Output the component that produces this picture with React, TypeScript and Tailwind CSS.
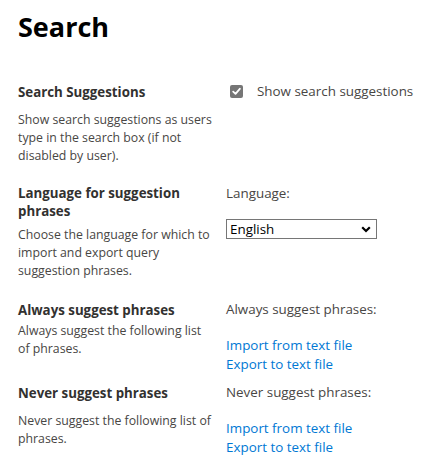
import React from 'react';

const font = { fontFamily: '"Open Sans", "Noto Sans", sans-serif' };

type SectionProps = { title: string; desc: string; gap: string; className?: string; children: React.ReactNode };

const Section = ({ title, desc, gap, className, children }: SectionProps) => (
  <div className={`flex ${className ?? ''}`}>
    <div className="w-[196px] shrink-0">
      <h3 className="text-[13.3px] font-bold leading-[18px] text-[#323130]">{title}</h3>
      <p className={`${gap} text-[12.3px] leading-[18px] text-[#484644]`}>{desc}</p>
    </div>
    <div className="ml-[12px] flex-1">{children}</div>
  </div>
);

const Link = ({ children }: { children: React.ReactNode }) => (
  <a href="#" className="block text-[13.4px] leading-[19px] text-[#0078d4]">{children}</a>
);

const App = () => {
  return (
    <div className="min-h-[470px] w-[426px] bg-white pl-[18px] pt-[8px]" style={font}>
      <h1 className="text-[27px] font-bold leading-[38px] text-black">Search</h1>

      <Section
        className="mt-[37px]"
        gap="mt-[10px]"
        title="Search Suggestions"
        desc="Show search suggestions as users type in the search box (if not disabled by user)."
      >
        <label className="-mt-[1px] flex items-center gap-[14px] pl-[4px] text-[13.4px] leading-[18px] text-[#484644]">
          <span className="flex h-[13px] w-[13px] items-center justify-center rounded-[2px] bg-[#767676]">
            <svg width="9" height="9" viewBox="0 0 9 9" fill="none">
              <path d="M1.2 4.6 L3.5 6.8 L7.8 1.8" stroke="white" strokeWidth="1.8" strokeLinecap="round" strokeLinejoin="round" />
            </svg>
          </span>
          Show search suggestions
        </label>
      </Section>

      <Section
        className="mt-[19px]"
        gap="mt-[6px]"
        title="Language for suggestion phrases"
        desc="Choose the language for which to import and export query suggestion phrases."
      >
        <div className="text-[13.4px] leading-[18px] text-[#484644]">Language:</div>
        <div className="mt-[17px] flex h-[20px] w-[151px] items-center justify-between border border-[#767676] bg-white pl-[3px] pr-[5px]">
          <span className="text-[13.4px] leading-[18px] text-black">English</span>
          <svg width="10" height="7" viewBox="0 0 10 7">
            <path d="M1.2 1.2 L5 5 L8.8 1.2" stroke="black" strokeWidth="2.2" fill="none" />
          </svg>
        </div>
      </Section>

      <Section
        className="mt-[21px]"
        gap="mt-[3px]"
        title="Always suggest phrases"
        desc="Always suggest the following list of phrases."
      >
        <div className="-mt-[1px] text-[13.4px] leading-[18px] text-[#484644]">Always suggest phrases:</div>
        <div className="mt-[18px]">
          <Link>Import from text file</Link>
          <Link>Export to text file</Link>
        </div>
      </Section>

      <Section
        className="mt-[10px]"
        gap="mt-[10px]"
        title="Never suggest phrases"
        desc="Never suggest the following list of phrases."
      >
        <div className="-mt-[1px] text-[13.4px] leading-[18px] text-[#484644]">Never suggest phrases:</div>
        <div className="mt-[18px]">
          <Link>Import from text file</Link>
          <Link>Export to text file</Link>
        </div>
      </Section>
    </div>
  );
};

export default App;
